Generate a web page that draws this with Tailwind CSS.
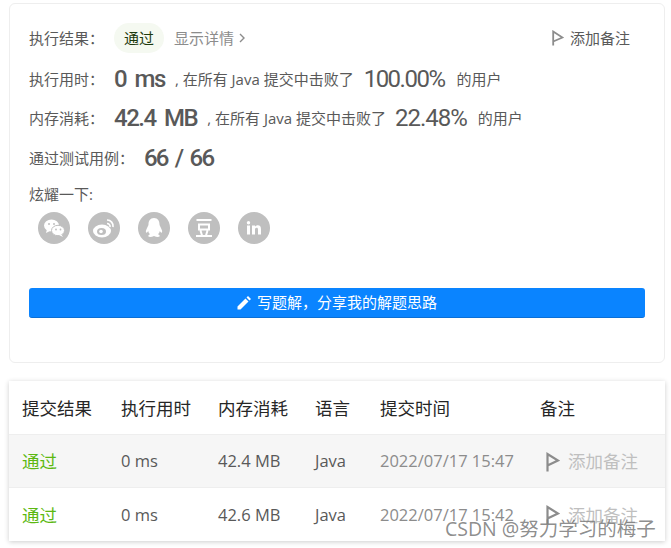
<!DOCTYPE html>
<html lang="en">
<head>
  <meta charset="UTF-8"/>
  <script src="https://cdn.jsdelivr.net/npm/@tailwindcss/browser@4"></script>
  <title>Submission result</title>
</head>
<body class="relative w-[671px] h-[548px] overflow-hidden bg-white font-['Open_Sans','Noto_Sans_CJK_SC',sans-serif] text-[#595959]">
  <!-- result card -->
  <section class="ml-[9px] mt-[3px] w-[656px] h-[360px] border border-[#eeeeee] rounded-[6px] bg-white pl-[19px] pr-[19px] pt-[18px]">
    <div class="flex items-center h-[32px] text-[15px]">
      <span class="w-[85px]">执行结果：</span>
      <span class="flex items-center justify-center w-[50px] h-[30px] rounded-full bg-[#f5f9f1] text-[#1e3a0e]">通过</span>
      <span class="ml-[10px] text-[#8c8c8c]">显示详情</span>
      <svg class="ml-[5px]" width="6" height="10" viewBox="0 0 6 10"><path d="M1 1l4 4-4 4" fill="none" stroke="#8c8c8c" stroke-width="1.4"/></svg>
      <span class="ml-auto flex items-center mr-[15px]">
        <svg width="12" height="16" viewBox="0 0 12 16"><path d="M1.2 15.500V1.500L10.500 7.500 1.200 11.500" fill="none" stroke="#8c8c8c" stroke-width="1.800"/></svg>
        <span class="ml-[6px]">添加备注</span>
      </span>
    </div>
    <div class="flex items-center h-[32px] mt-[9px] text-[15px]">
      <span class="w-[85px]">执行用时：</span>
      <span class="font-['Roboto',sans-serif] text-[24px] font-medium tracking-[-1.5px] [word-spacing:4px]">0 ms</span>
      <span class="ml-[10px]">, 在所有 Java 提交中击败了</span>
      <span class="ml-[10px] font-['Roboto',sans-serif] text-[24px] tracking-[-1.5px]">100.00%</span>
      <span class="ml-[12px]">的用户</span>
    </div>
    <div class="flex items-center h-[32px] mt-[7px] text-[15px]">
      <span class="w-[85px]">内存消耗：</span>
      <span class="font-['Roboto',sans-serif] text-[24px] font-medium tracking-[-1.5px] [word-spacing:4px]">42.4 MB</span>
      <span class="ml-[10px]">, 在所有 Java 提交中击败了</span>
      <span class="ml-[9px] font-['Roboto',sans-serif] text-[24px] tracking-[-1px]">22.48%</span>
      <span class="ml-[11px]">的用户</span>
    </div>
    <div class="flex items-center h-[32px] mt-[8px] text-[15px]">
      <span class="w-[115px]">通过测试用例：</span>
      <span class="font-['Roboto',sans-serif] text-[24px] font-medium tracking-[-1.8px] [word-spacing:3px]">66 / 66</span>
    </div>
    <div class="mt-[10px] h-[20px] leading-[20px] text-[15px]">炫耀一下:</div>
    <div class="flex gap-[18px] mt-[8px] ml-[9px]">
      <span class="flex items-center justify-center w-[32px] h-[32px] rounded-full bg-[#bfbfbf]">
        <svg width="22" height="20" viewBox="0 0 22 20" fill="#fff"><ellipse cx="8.500" cy="7.500" rx="7.500" ry="6"/><path d="M4 11l-1 4 4-2z"/><circle cx="6" cy="6" r="1" fill="#bfbfbf"/><circle cx="11" cy="6" r="1" fill="#bfbfbf"/><ellipse cx="15" cy="12.500" rx="6.500" ry="5.200" stroke="#bfbfbf"/><path d="M18 16l2 3-4-2z"/><circle cx="13" cy="11.500" r=".9" fill="#bfbfbf"/><circle cx="17.500" cy="11.500" r=".9" fill="#bfbfbf"/></svg>
      </span>
      <span class="flex items-center justify-center w-[32px] h-[32px] rounded-full bg-[#bfbfbf]">
        <svg width="24" height="22" viewBox="0 0 24 22"><ellipse cx="10" cy="14" rx="9" ry="6.500" fill="#fff"/><ellipse cx="9.500" cy="14.500" rx="4.500" ry="3.500" fill="#bfbfbf"/><circle cx="9" cy="14.500" r="1.800" fill="#fff"/><path d="M15 3a6 6 0 0 1 6 7M15 6.500a3 3 0 0 1 3 3.500" fill="none" stroke="#fff" stroke-width="1.700"/></svg>
      </span>
      <span class="flex items-center justify-center w-[32px] h-[32px] rounded-full bg-[#bfbfbf]">
        <svg width="20" height="22" viewBox="0 0 20 22" fill="#fff"><path d="M10 1c4 0 5.500 3 5.500 6.500 0 1 1.500 3 2.500 6 .5 2-.5 3-1.500 1.500l-.7-1c-.3 1.500-1 2.500-1.800 3.200 1.500.5 2 1.500 1.500 2.300-.8.8-3.500.5-5.500-.5-2 1-4.700 1.300-5.500.5-.5-.8 0-1.800 1.500-2.300-.8-.7-1.500-1.700-1.800-3.200l-.7 1C2.500 16.500 1.500 15.500 2 13.500c1-3 2.500-5 2.500-6C4.500 4 6 1 10 1z"/></svg>
      </span>
      <span class="flex items-center justify-center w-[32px] h-[32px] rounded-full bg-[#bfbfbf]">
        <svg width="20" height="20" viewBox="0 0 20 20" fill="none" stroke="#fff" stroke-width="2"><path d="M2.500 2h15M5 6.500h10v5H5zM6.500 12.500l1.500 5M13.500 12.500l-1.500 5M2 18h16"/></svg>
      </span>
      <span class="flex items-center justify-center w-[32px] h-[32px] rounded-full bg-[#bfbfbf] text-white">
        <svg width="16" height="14" viewBox="0 0 16 14" fill="#fff"><rect x="1" y="4.500" width="3" height="9"/><circle cx="2.500" cy="1.800" r="1.700"/><path d="M6 4.500h3v1.300c.6-1 1.700-1.500 2.800-1.500 2.300 0 3.200 1.500 3.200 3.900v5.300h-3V8.500c0-1.200-.4-1.800-1.400-1.800S9 7.400 9 8.500v5H6z"/></svg>
      </span>
    </div>
    <button class="flex items-center justify-center w-[616px] h-[30px] mt-[44px] rounded-[3px] bg-[#0a84ff] border-b border-[#0b6fd6] text-white text-[15px]">
      <svg width="14" height="14" viewBox="0 0 14 14" fill="#fff"><path d="M0.500 13.500v-3L8.500 2.500l3 3-8 8zM9.500 1.500L11 0l3 3-1.500 1.500z"/></svg>
      <span class="ml-[6px]">写题解，分享我的解题思路</span>
    </button>
  </section>

  <!-- submissions table -->
  <section class="ml-[9px] mt-[18px] w-[656px] h-[160px] bg-white shadow-[0_1px_5px_rgba(0,0,0,0.2)] text-[16.500px]">
    <div class="grid grid-cols-[99px_97px_97px_65px_160px_1fr] items-center h-[54px] pl-[13px] pt-[2px] text-[17.500px] text-[#262626] border-b border-[#eeeeee]">
      <span>提交结果</span><span>执行用时</span><span>内存消耗</span><span>语言</span><span>提交时间</span><span>备注</span>
    </div>
    <div class="grid grid-cols-[99px_97px_97px_65px_160px_1fr] items-center h-[53px] pl-[13px] pt-[1px] bg-[#f6f6f6] border-b border-[#eeeeee]">
      <span class="text-[#5cb811] text-[17.500px]">通过</span><span>0 ms</span><span>42.4 MB</span><span>Java</span><span class="text-[#8c8c8c]">2022/07/17 15:47</span>
      <span class="flex items-center pl-[6px] text-[#bfbfbf] text-[17.500px]"><svg width="14" height="20" viewBox="0 0 14 20"><path d="M1.500 19.500V2L12 8.500 1.500 13.500" fill="none" stroke="#8c8c8c" stroke-width="2.200"/></svg><span class="ml-[8px]">添加备注</span></span>
    </div>
    <div class="grid grid-cols-[99px_97px_97px_65px_160px_1fr] items-center h-[53px] pl-[13px] pt-[1px]">
      <span class="text-[#5cb811] text-[17.500px]">通过</span><span>0 ms</span><span>42.6 MB</span><span>Java</span><span class="text-[#8c8c8c]">2022/07/17 15:42</span>
      <span class="flex items-center pl-[6px] text-[#bfbfbf] text-[17.500px]"><svg width="14" height="20" viewBox="0 0 14 20"><path d="M1.500 19.500V2L12 8.500 1.500 13.500" fill="none" stroke="#8c8c8c" stroke-width="2.200"/></svg><span class="ml-[8px]">添加备注</span></span>
    </div>
  </section>

  <!-- watermark -->
  <div class="absolute left-[445px] top-[516px] text-[19.500px] leading-[26px] text-[#7f7f7f]/90">CSDN @努力学习的梅子</div>
</body>
</html>
